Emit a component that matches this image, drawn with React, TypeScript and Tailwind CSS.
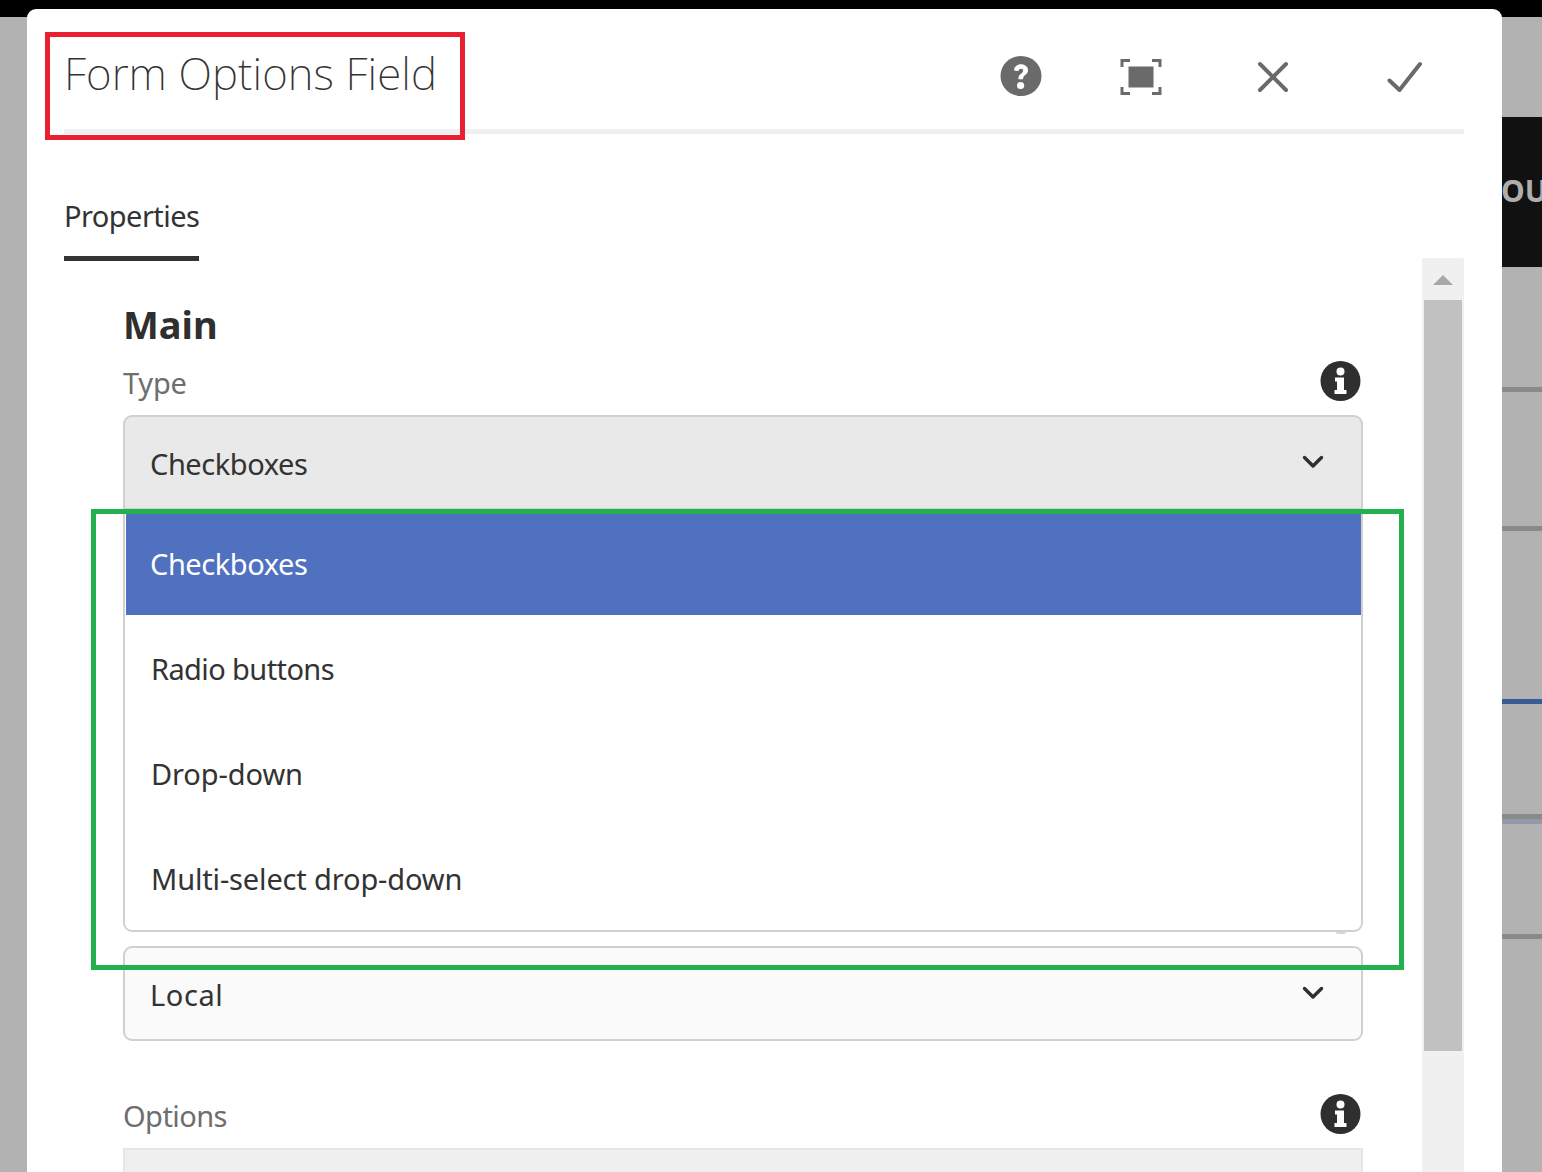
const font = '"Noto Sans", "Open Sans", sans-serif';

function Info() {
  return (
    <svg width="41" height="40" viewBox="0 0 41 40" className="block">
      <ellipse cx="20.5" cy="20" rx="20" ry="20" fill="#2f2f2f" />
      <circle cx="20.5" cy="10.5" r="4" fill="#fff" />
      <path d="M15 16.5h9v12.5h2.5v4h-12v-4H17v-8.5h-2z" fill="#fff" />
    </svg>
  );
}

function Chevron() {
  return (
    <svg width="22" height="14" viewBox="0 0 22 14" className="block">
      <path d="M2.5 2.5 11 11l8.5-8.5" fill="none" stroke="#2f2f2f" strokeWidth="3.4" strokeLinecap="round" strokeLinejoin="round" />
    </svg>
  );
}

function Select({ label, bg, rounded, tracking }: { label: string; bg: string; rounded: string; tracking: string }) {
  return (
    <div className={`flex h-[95px] items-center justify-between border-2 border-[#d0d0d0] pl-[25px] pr-[37px] ${bg} ${rounded}`}>
      <span className={`mt-[2px] text-[29px] leading-[40px] text-[#333333] ${tracking}`}>{label}</span>
      <span className="mt-[-1px]"><Chevron /></span>
    </div>
  );
}

const strip = 'h-[5px] bg-[#8a8a8a]';

export default function App() {
  return (
    <div className="relative h-[1172px] w-[1542px] overflow-hidden bg-[#b2b2b2]" style={{ fontFamily: font }}>
      <div className="h-[17px] bg-black" />
      <div className="pl-[1502px]">
        <div className="mt-[100px] flex h-[150px] items-center overflow-hidden whitespace-nowrap bg-[#111111]">
          <span className="-ml-[1px] -mt-[2px] text-[30px] font-bold leading-none text-[#aeaeae]">OU</span>
        </div>
        <div className="mt-[120px]"><div className={strip} /></div>
        <div className="mt-[134px]"><div className={strip} /></div>
        <div className="mt-[168px] h-[5px] bg-[#3c5a96]" />
        <div className="mt-[110px]"><div className={strip} /></div>
        <div className="h-[5px] bg-[#9299ab]" />
        <div className="mt-[110px]"><div className={strip} /></div>
      </div>

      <div className="absolute bottom-0 left-[27px] top-[9px] w-[1475px] overflow-hidden rounded-t-[9px] bg-white pl-[37px] pr-[38px]">
        <div className="flex h-[120px] items-start justify-between">
          <h1 className="mt-[32px] text-[44px] font-extralight leading-[64px] tracking-[0.1px] text-[#333333]">Form Options Field</h1>
          <div className="mt-[47px] flex items-start">
            <svg width="42" height="40" viewBox="0 0 42 40" className="block">
              <ellipse cx="21" cy="20" rx="20.5" ry="20" fill="#6a6a6a" />
              <path d="M14 14.5c0-3.7 3.2-6.2 7-6.2s7 2.4 7 5.8c0 5-5 4.6-5 9.2h-4.6c0-6 4.8-5.4 4.8-8.8 0-1.1-.9-1.8-2.2-1.8s-2.4.8-2.4 2.3z" fill="#fff" />
              <circle cx="20.6" cy="29.5" r="3.6" fill="#fff" />
            </svg>
            <svg width="42" height="36" viewBox="0 0 42 36" className="ml-[78px] mt-[3px] block">
              <path d="M10 1.5H2V8M32 1.5h8V8M10 34.5H2V28M32 34.5h8V28" fill="none" stroke="#6a6a6a" strokeWidth="3" />
              <rect x="8.5" y="7.5" width="25" height="21" fill="#6a6a6a" />
            </svg>
            <svg width="32" height="32" viewBox="0 0 32 32" className="ml-[95px] mt-[5px] block">
              <path d="M3 3l26 26M29 3 3 29" fill="none" stroke="#6a6a6a" strokeWidth="4" strokeLinecap="round" />
            </svg>
            <svg width="36" height="32" viewBox="0 0 36 32" className="ml-[98px] mr-[41px] mt-[5px] block">
              <path d="M2.5 19.5 12.5 29 33 3" fill="none" stroke="#6a6a6a" strokeWidth="4" strokeLinecap="round" strokeLinejoin="round" />
            </svg>
          </div>
        </div>
        <div className="h-[5px] bg-[#f0f0f0]" />

        <div className="flex h-[127px] items-end">
          <div className="border-b-[5px] border-[#333333] pb-[20px] text-[29px] leading-[40px] tracking-[-0.55px] text-[#333333]">Properties</div>
        </div>

        <div className="-mt-[3px] flex items-start">
          <div className="w-[1299px] pl-[59px]">
            <div className="relative w-[1240px]">
              <h2 className="pt-[42px] pb-[2px] text-[38px] font-bold leading-[48px] text-[#2f2f2f]">Main</h2>
              <div className="mt-[11px] flex h-[40px] items-center justify-between pr-[2px]">
                <span className="mt-[4px] text-[29px] leading-[40px] tracking-[-0.2px] text-[#6e6e6e]">Type</span>
                <Info />
              </div>
              <div className="mt-[14px]">
                <Select label="Checkboxes" bg="bg-[#e9e9e9]" rounded="rounded-t-[9px]" tracking="tracking-[-0.45px]" />
              </div>
              <div className="relative h-[422px] rounded-b-[9px] border-2 border-[#d0d0d0] bg-white pl-px pt-[2px]">
                <div className="flex h-[101px] items-center bg-[#5070c0] pb-[2px] pl-[24px] text-[29px] leading-[40px] tracking-[-0.45px] text-white">Checkboxes</div>
                <div className="mt-[2px] flex h-[105px] items-center pb-[2px] pl-[25px] text-[29px] leading-[40px] tracking-[-0.6px] text-[#333333]">Radio buttons</div>
                <div className="flex h-[105px] items-center pb-[2px] pl-[25px] text-[29px] leading-[40px] tracking-[-0.1px] text-[#333333]">Drop-down</div>
                <div className="flex h-[105px] items-center pb-[2px] pl-[25px] text-[29px] leading-[40px] tracking-[-0.15px] text-[#333333]">Multi-select drop-down</div>
                <div className="absolute -bottom-[4px] right-[15px] h-[2px] w-[10px] rounded-b-full bg-[#d8d8d8]" />
              </div>
              <div className="mt-[14px]">
                <Select label="Local" bg="bg-[#fafafa]" rounded="rounded-[9px]" tracking="tracking-[0.6px]" />
              </div>
              <div className="mt-[53px] flex h-[40px] items-center justify-between pr-[2px]">
                <span className="mt-[4px] text-[29px] leading-[40px] tracking-[-0.55px] text-[#6e6e6e]">Options</span>
                <Info />
              </div>
              <div className="mt-[14px] h-[100px] border-x-2 border-t-2 border-[#e6e6e6] bg-[#efefef]" />
            </div>
          </div>
          <div className="ml-auto h-[914px] w-[42px] rounded-t-[2px] bg-[#f0f0f0] px-[2px]">
            <div className="flex h-[42px] items-center justify-center pt-[1px]">
              <svg width="20" height="12" viewBox="0 0 20 12" className="block">
                <path d="M10 1 20 11H0z" fill="#a8a8a8" />
              </svg>
            </div>
            <div className="h-[751px] bg-[#c1c1c1]" />
          </div>
        </div>
      </div>

      <div className="absolute left-[45px] top-[32px] h-[108px] w-[420px] border-[5px] border-[#e8202f]" />
      <div className="absolute left-[91px] top-[509px] h-[461px] w-[1313px] border-[5px] border-[#22b14c]" />
    </div>
  );
}
